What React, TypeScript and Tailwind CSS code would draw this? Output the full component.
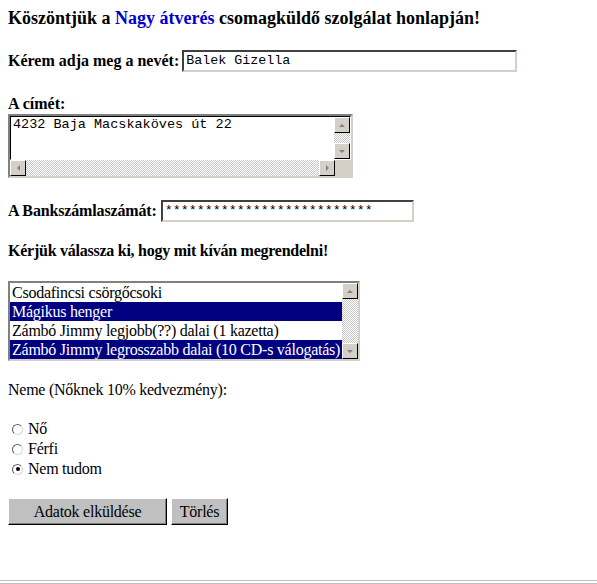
import React from 'react'

const orders = [
  { label: 'Csodafincsi csörgőcsoki', selected: false },
  { label: 'Mágikus henger', selected: true },
  { label: 'Zámbó Jimmy legjobb(??) dalai (1 kazetta)', selected: false },
  { label: 'Zámbó Jimmy legrosszabb dalai (10 CD-s válogatás)', selected: true },
]

const genders = [
  { label: 'Nő', checked: false },
  { label: 'Férfi', checked: false },
  { label: 'Nem tudom', checked: true },
]

// régi windowsos görgetősáv gomb
const ScrollButton = ({ dir }: { dir: 'up' | 'down' | 'left' | 'right' }) => {
  const arrow = {
    up: 'border-x-[3px] border-x-transparent border-b-[3px] border-b-[#808080]',
    down: 'border-x-[3px] border-x-transparent border-t-[3px] border-t-[#808080]',
    left: 'border-y-[3px] border-y-transparent border-r-[3px] border-r-[#808080]',
    right: 'border-y-[3px] border-y-transparent border-l-[3px] border-l-[#808080]',
  }[dir]
  return (
    <div className="w-4 h-4 shrink-0 bg-[#d4d0c8] border border-t-white border-l-white border-r-black border-b-black flex items-center justify-center">
      <div className={`w-0 h-0 ${arrow}`} />
    </div>
  )
}

const Track = ({ className = '' }: { className?: string }) => (
  <div
    className={`bg-[repeating-conic-gradient(#c8c8c8_0_25%,#ffffff_0_50%)] bg-size-[2px_2px] ${className}`}
  />
)

const Radio = ({ checked }: { checked: boolean }) => (
  <span className="w-[11px] h-[11px] rounded-full border border-t-[#606060] border-l-[#606060] border-r-[#d8d8d8] border-b-[#d8d8d8] bg-white flex items-center justify-center">
    {checked && <span className="w-[4px] h-[4px] rounded-full bg-black" />}
  </span>
)

export default function App() {
  return (
    <div className="h-[584px] flex flex-col bg-white text-black font-['Liberation_Serif','Times_New_Roman',serif]">
      <div className="px-2 pt-[8px] flex flex-col">
        <h1 className="text-[18px] font-bold leading-[20px]">
          Köszöntjük a <span className="text-[#0000cc]">Nagy átverés</span> csomagküldő szolgálat honlapján!
        </h1>

        <div className="mt-[22px] flex items-end gap-[3px]">
          <span className="text-[16px] font-bold leading-[18px] pb-[2px]">Kérem adja meg a nevét:</span>
          <div className="w-[335px] h-[22px] border-2 border-t-[#404040] border-l-[#404040] border-r-[#d4d0c8] border-b-[#d4d0c8] bg-white px-[2px] font-['Liberation_Mono','Courier_New',monospace] text-[13.33px] leading-[18px]">
            Balek Gizella
          </div>
        </div>

        <div className="mt-[23px] text-[16px] font-bold leading-[18px]">A címét:</div>
        <div className="mt-[1px] w-[345px] h-[64px] border-2 border-t-[#808080] border-l-[#808080] border-r-[#d4d0c8] border-b-[#d4d0c8] flex flex-col">
          <div className="flex-1 flex border border-t-black border-l-black border-r-transparent border-b-transparent min-h-0">
            <div className="flex-1 bg-white px-[2px] font-['Liberation_Mono','Courier_New',monospace] text-[13.5px] leading-[16px]">
              4232 Baja Macskaköves út 22
            </div>
            <div className="w-4 flex flex-col">
              <ScrollButton dir="up" />
              <Track className="flex-1" />
              <ScrollButton dir="down" />
            </div>
          </div>
          <div className="h-4 flex">
            <ScrollButton dir="left" />
            <Track className="flex-1" />
            <ScrollButton dir="right" />
            <div className="w-4 bg-[#d4d0c8]" />
          </div>
        </div>

        <div className="mt-[22px] flex items-end gap-[4px]">
          <span className="text-[16px] font-bold leading-[18px] pb-[2px] tracking-[-0.15px]">A Bankszámlaszámát:</span>
          <div className="w-[253px] h-[22px] border-2 border-t-[#404040] border-l-[#404040] border-r-[#d4d0c8] border-b-[#d4d0c8] bg-white px-[2px] font-['Liberation_Mono','Courier_New',monospace] text-[13.33px] leading-[18px]">
            **************************
          </div>
        </div>

        <div className="mt-[20px] text-[16px] font-bold leading-[18px] tracking-[-0.25px]">
          Kérjük válassza ki, hogy mit kíván megrendelni!
        </div>

        <div className="mt-[21px] w-[352px] border-2 border-t-[#808080] border-l-[#808080] border-r-[#d4d0c8] border-b-[#d4d0c8] flex">
          <div className="flex-1 min-w-0 overflow-hidden flex flex-col text-[16px] leading-[19px] tracking-[-0.25px]">
            {orders.map((o) => (
              <div
                key={o.label}
                className={`px-[2px] whitespace-nowrap ${o.selected ? 'bg-[#000080] text-white' : 'bg-white text-black'}`}
              >
                {o.label}
              </div>
            ))}
          </div>
          <div className="w-4 flex flex-col">
            <ScrollButton dir="up" />
            <Track className="flex-1" />
            <ScrollButton dir="down" />
          </div>
        </div>

        <div className="mt-[20px] text-[16px] leading-[18px] tracking-[-0.25px]">Neme (Nőknek 10% kedvezmény):</div>

        <div className="mt-[20px] flex flex-col text-[16px] leading-[20px] tracking-[-0.25px]">
          {genders.map((g) => (
            <label key={g.label} className="flex items-center gap-[5px] pl-[4px]">
              <Radio checked={g.checked} />
              <span>{g.label}</span>
            </label>
          ))}
        </div>

        <div className="mt-[19px] flex gap-[4px]">
          <button className="w-[159px] h-[27px] bg-[#c0c0c0] border border-t-white border-l-white border-r-black border-b-black shadow-[inset_-1px_-1px_0_#808080] text-[16px] tracking-[-0.25px]">
            Adatok elküldése
          </button>
          <button className="w-[57px] h-[27px] bg-[#c0c0c0] border border-t-white border-l-white border-r-black border-b-black shadow-[inset_-1px_-1px_0_#808080] text-[16px] tracking-[-0.25px]">
            Törlés
          </button>
        </div>
      </div>

      <div className="flex-1" />
      <div className="h-[4px] border-t border-b border-[#c0c0c0]" />
    </div>
  )
}
